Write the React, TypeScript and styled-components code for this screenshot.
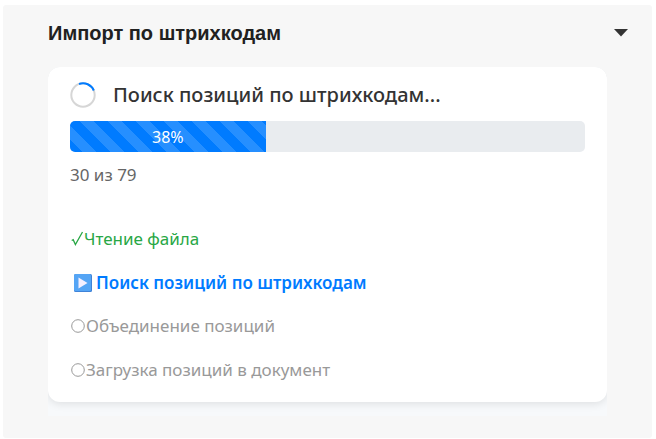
import React from "react";
import styled, { createGlobalStyle } from "styled-components";

const Global = createGlobalStyle`
  * { box-sizing: border-box; }
  body { margin: 0; background: #fff; font-family: "Noto Sans", "Open Sans", sans-serif; }
`;

const Panel = styled.section`
  margin: 5px 4px 1px 3px;
  padding: 0 45px 22px;
  background: #f7f7f7;
  border-radius: 3px;
`;

const Header = styled.header`
  display: flex;
  align-items: center;
  justify-content: space-between;
  height: 62px;
  padding-bottom: 6px;
  margin-right: -21px;
`;

const Title = styled.h2`
  margin: 0;
  font: bold 20px/24px "Liberation Sans", Arial, sans-serif;
  color: #212121;
`;

const Toggle = styled.button`
  display: flex;
  padding: 0;
  border: 0;
  background: none;
`;

const Body = styled.div`
  padding-bottom: 14px;
  background: #f7f9fb;
  overflow: hidden;
  border-radius: 12px 12px 0 0;
`;

const Card = styled.div`
  padding: 14px 22px 10px;
  background: #fff;
  border-radius: 12px;
  box-shadow: 0 2px 8px rgba(0, 0, 0, 0.1);
`;

const Status = styled.div`
  display: flex;
  align-items: center;
  gap: 17px;
  height: 28px;
  margin-bottom: 12px;
`;

const StatusText = styled.h3`
  margin: 0;
  font-size: 20px;
  line-height: 28px;
  font-weight: 500;
  color: #333;
  white-space: nowrap;
`;

const Track = styled.div`
  height: 31px;
  overflow: hidden;
  background: #e9ecef;
  border-radius: 5px;
`;

const Fill = styled.div`
  height: 100%;
  color: #fff;
  font-size: 16px;
  line-height: 32px;
  text-align: center;
  background: #007bff linear-gradient(45deg, rgba(255, 255, 255, 0.15) 25%, transparent 25%, transparent 50%,
    rgba(255, 255, 255, 0.15) 50%, rgba(255, 255, 255, 0.15) 75%, transparent 75%, transparent) 10px 0 / 28px 28px;
`;

const Count = styled.p`
  margin: 11px 0 30px;
  font-size: 17px;
  line-height: 24px;
  color: #666;
`;

const Steps = styled.ol`
  display: grid;
  margin: 0;
  padding: 0;
  list-style: none;
`;

type State = "done" | "active" | "pending";
const stepColor = { done: "#28a745", active: "#007bff", pending: "#999" };

const Step = styled.li<{ $state: State }>`
  display: flex;
  align-items: center;
  height: ${(p) => (p.$state === "active" ? 43 : 44)}px;
  padding-left: 1px;
  font-size: 17px;
  line-height: 24px;
  font-weight: ${(p) => (p.$state === "active" ? 600 : 400)};
  color: ${(p) => stepColor[p.$state]};
  white-space: nowrap;
`;

const Marker = ({ state }: { state: State }) => {
  if (state === "done")
    return (
      <svg width="13" height="18" viewBox="0 0 13 18" fill="none" stroke="currentColor" aria-hidden="true">
        <path d="M.7 10.5l1.5-.8 2.2 4.8L11.5 2" strokeWidth="1.3" />
      </svg>
    );
  if (state === "active")
    return (
      <svg width="25" height="20" viewBox="0 0 25 20" aria-hidden="true">
        <rect x="3" y="1" width="18" height="18" rx="1.5" fill="#3f83d8" />
        <rect x="3" y="1" width="17" height="17" rx="1.5" fill="#55a5f5" />
        <path d="M7.5 4.5v11l9-5.5z" fill="#f5f0ff" />
      </svg>
    );
  return (
    <svg width="15" height="18" viewBox="0 0 15 18" fill="none" stroke="currentColor" aria-hidden="true">
      <circle cx="7" cy="9" r="6.3" />
    </svg>
  );
};

const steps: { label: string; state: State }[] = [
  { label: "Чтение файла", state: "done" },
  { label: "Поиск позиций по штрихкодам", state: "active" },
  { label: "Объединение позиций", state: "pending" },
  { label: "Загрузка позиций в документ", state: "pending" },
];

export default function App() {
  const percent = 38;
  return (
    <>
      <Global />
      <Panel>
        <Header>
          <Title>Импорт по штрихкодам</Title>
          <Toggle type="button" aria-label="Свернуть">
            <svg width="14" height="8" viewBox="0 0 14 8" aria-hidden="true">
              <path d="M0 0h14L7 7.5z" fill="#333" />
            </svg>
          </Toggle>
        </Header>
        <Body>
          <Card>
            <Status>
              <svg width="26" height="26" viewBox="0 0 26 26" fill="none" strokeWidth="2" aria-hidden="true">
                <circle cx="13" cy="13" r="11.7" stroke="#d6d6d6" />
                <path d="M9 2A11.7 11.7 0 0 1 23.8 8.5" stroke="#007bff" />
              </svg>
              <StatusText>Поиск позиций по штрихкодам...</StatusText>
            </Status>
            <Track role="progressbar" aria-valuenow={percent} aria-valuemin={0} aria-valuemax={100} aria-label="Поиск позиций">
              <Fill style={{ width: `${percent}%` }}>{percent}%</Fill>
            </Track>
            <Count>30 из 79</Count>
            <Steps>
              {steps.map((s) => (
                <Step key={s.label} $state={s.state}>
                  <Marker state={s.state} />
                  {s.label}
                </Step>
              ))}
            </Steps>
          </Card>
        </Body>
      </Panel>
    </>
  );
}
